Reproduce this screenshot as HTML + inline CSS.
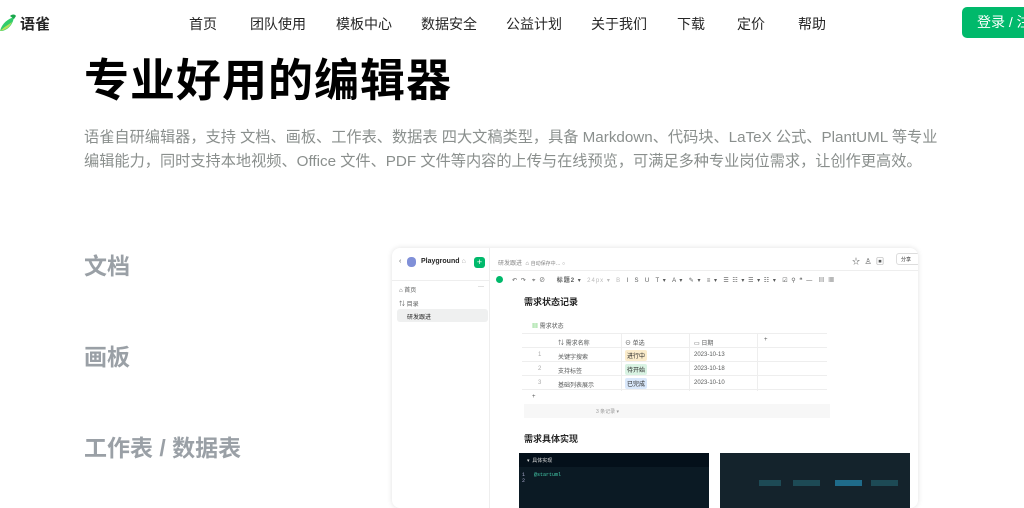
<!DOCTYPE html>
<html><head><meta charset="utf-8">
<style>
*{margin:0;padding:0;box-sizing:border-box}
body{width:1024px;height:486px;overflow:hidden;background:#fff;font-family:"Liberation Sans","Noto Sans CJK SC",sans-serif;position:relative;color:#262626}
.a{position:absolute;white-space:nowrap}
.nav{font-size:14px;color:#262626;top:14px}
.side{color:#9aa0a6;font-weight:bold;font-size:23px}
.s{font-size:6px;color:#585a5a}
.pill{font-size:6px;padding:1px 2px;border-radius:2px}
</style></head><body>
<svg class="a" style="left:0;top:13px" width="20" height="20" viewBox="0 0 20 20"><path d="M0 18 C2 10 8 6 14 4 C13 10 10 16 2 18 Z" fill="#31cc6b"/><path d="M10 3 C12 1 15 1 16 3 L14 6 Z" fill="#1aa64c"/><path d="M0 18 C4 14 8 12 12 9 C10 14 6 17 0 18Z" fill="#b4e05a"/></svg>
<div class="a" style="left:20px;top:13px;font-size:15px;font-weight:bold">语雀</div>
<div class="a nav" style="left:189px">首页</div>
<div class="a nav" style="left:250px">团队使用</div>
<div class="a nav" style="left:336px">模板中心</div>
<div class="a nav" style="left:421px">数据安全</div>
<div class="a nav" style="left:506px">公益计划</div>
<div class="a nav" style="left:591px">关于我们</div>
<div class="a nav" style="left:677px">下载</div>
<div class="a nav" style="left:737px">定价</div>
<div class="a nav" style="left:798px">帮助</div>
<div class="a" style="left:962px;top:7px;width:80px;height:31px;background:#00b96b;border-radius:5px;color:#fff;font-size:14px;line-height:31px;padding-left:15px">登录 / 注册</div>
<div class="a" style="left:84px;top:44px;font-size:45px;font-weight:bold;color:#000;letter-spacing:1px">专业好用的编辑器</div>
<div class="a" style="left:84px;top:126px;font-size:15.2px;color:#8a8f8d;line-height:24px">语雀自研编辑器，支持 文档、画板、工作表、数据表 四大文稿类型，具备 Markdown、代码块、LaTeX 公式、PlantUML 等专业<br>编辑能力，同时支持本地视频、Office 文件、PDF 文件等内容的上传与在线预览，可满足多种专业岗位需求，让创作更高效。</div>
<div class="a side" style="left:84px;top:247px">文档</div>
<div class="a side" style="left:84px;top:338px">画板</div>
<div class="a side" style="left:84px;top:429px">工作表 / 数据表</div>

<div class="a" style="left:392px;top:248px;width:526px;height:260px;border-radius:8px;background:#fff;box-shadow:0 0 6px rgba(0,0,0,.12);overflow:hidden">
 <div class="a" style="left:97px;top:0;width:1px;height:100%;background:#eee"></div>
 <div class="a s" style="left:7px;top:10px;font-size:7px">‹</div>
 <div class="a" style="left:15px;top:9px;width:9px;height:10px;border-radius:4px;background:#8090d8"></div>
 <div class="a" style="left:29px;top:10px;font-size:7px;font-weight:bold">Playground <span style="color:#aaa;font-weight:normal">⌂</span></div>
 <div class="a" style="left:82px;top:9px;width:11px;height:11px;border-radius:3px;background:#00b96b;color:#fff;font-size:9px;line-height:11px;text-align:center">+</div>
 <div class="a" style="left:0;top:32px;width:97px;height:1px;background:#eee"></div>
 <div class="a s" style="left:7px;top:37px">⌂ 首页</div><div class="a s" style="left:86px;top:36px">···</div>
 <div class="a s" style="left:7px;top:51px">⇅ 目录</div>
 <div class="a" style="left:5px;top:61px;width:91px;height:13px;background:#eff0f0;border-radius:3px"></div>
 <div class="a s" style="left:15px;top:64px;color:#262626">研发跟进</div>
 <div class="a s" style="left:106px;top:10px;color:#888">研发跟进 &nbsp;⌂ <span style="font-size:5px">自动保存中… ○</span></div>
 <div class="a s" style="left:460px;top:8px;font-size:8px">☆ &nbsp;♙ &nbsp;▣</div>
 <div class="a" style="left:504px;top:5px;width:24px;height:12px;border:1px solid #ddd;border-radius:3px;font-size:5px;padding:2px 4px">分享</div>
 <div class="a" style="left:99px;top:22px;width:430px;height:1px;background:#eee"></div>
 <div class="a" style="left:104px;top:28px;width:7px;height:7px;border-radius:50%;background:#00b96b"></div>
 <div class="a s" style="left:120px;top:27px;letter-spacing:1px">↶ ↷ &nbsp;⌖ ⊘ &nbsp;&nbsp; <b>标题2</b> ▾ &nbsp;<span style="color:#bbb">24px ▾ &nbsp;B</span> &nbsp;I &nbsp;S &nbsp;U &nbsp;T ▾ &nbsp;A ▾ &nbsp;✎ ▾ &nbsp;≡ ▾ &nbsp;☰ ☷ ▾ ☰ ▾ ☷ ▾ &nbsp;☑ ⚲ ❝ — &nbsp;▤ ▦</div>
 <div class="a" style="left:132px;top:47px;font-size:9px;font-weight:bold">需求状态记录</div>
 <div class="a s" style="left:140px;top:73px"><span style="color:#6c6">▦</span> 需求状态</div>
 <div class="a" style="left:130px;top:85px;width:305px;height:1px;background:#eee"></div>
 <div class="a" style="left:229px;top:85px;width:1px;height:58px;background:#eee"></div>
 <div class="a" style="left:297px;top:85px;width:1px;height:58px;background:#eee"></div>
 <div class="a" style="left:365px;top:85px;width:1px;height:58px;background:#eee"></div>
 <div class="a s" style="left:166px;top:90px">⇅ 需求名称</div><div class="a s" style="left:233px;top:90px">⊖ 单选</div><div class="a s" style="left:302px;top:90px">▭ 日期</div><div class="a s" style="left:372px;top:89px">+</div>
 <div class="a" style="left:130px;top:99px;width:305px;height:1px;background:#eee"></div>
 <div class="a s" style="left:146px;top:104px;color:#aaa">1</div><div class="a s" style="left:166px;top:104px">关键字搜索</div><div class="a pill" style="left:233px;top:102px;background:#fbeccb">进行中</div><div class="a s" style="left:302px;top:104px">2023-10-13</div>
 <div class="a" style="left:130px;top:113px;width:305px;height:1px;background:#eee"></div>
 <div class="a s" style="left:146px;top:118px;color:#aaa">2</div><div class="a s" style="left:166px;top:118px">支持标签</div><div class="a pill" style="left:233px;top:116px;background:#d9f3e3">待开始</div><div class="a s" style="left:302px;top:118px">2023-10-18</div>
 <div class="a" style="left:130px;top:127px;width:305px;height:1px;background:#eee"></div>
 <div class="a s" style="left:146px;top:132px;color:#aaa">3</div><div class="a s" style="left:166px;top:132px">基础列表展示</div><div class="a pill" style="left:233px;top:130px;background:#d9e8fb">已完成</div><div class="a s" style="left:302px;top:132px">2023-10-10</div>
 <div class="a" style="left:130px;top:141px;width:305px;height:1px;background:#eee"></div>
 <div class="a s" style="left:140px;top:146px">+</div>
 <div class="a" style="left:132px;top:156px;width:306px;height:14px;background:#f7f7f7"></div>
 <div class="a s" style="left:204px;top:160px;font-size:5px;color:#999">3 条记录 ▾</div>
 <div class="a" style="left:132px;top:184px;font-size:9px;font-weight:bold">需求具体实现</div>
 <div class="a" style="left:127px;top:205px;width:190px;height:60px;background:#0b1a24"></div>
 <div class="a" style="left:127px;top:205px;width:190px;height:14px;background:#04101a;color:#ddd;font-size:5px;padding:4px 8px">▾ &nbsp;具体实现</div>
 <div class="a" style="left:130px;top:224px;font-size:5px;color:#aac;font-family:'Liberation Mono',monospace">1 &nbsp; <span style="color:#4ca">@startuml</span><br>2</div>
 <div class="a" style="left:328px;top:205px;width:190px;height:60px;background:#14232c"></div>
 <div class="a" style="left:367px;top:232px;width:22px;height:6px;background:#1d4a55"></div>
 <div class="a" style="left:401px;top:232px;width:27px;height:6px;background:#1d4a55"></div>
 <div class="a" style="left:443px;top:232px;width:27px;height:6px;background:#1f6b8a"></div>
 <div class="a" style="left:479px;top:232px;width:27px;height:6px;background:#1d4a55"></div>
</div>
</body></html>
